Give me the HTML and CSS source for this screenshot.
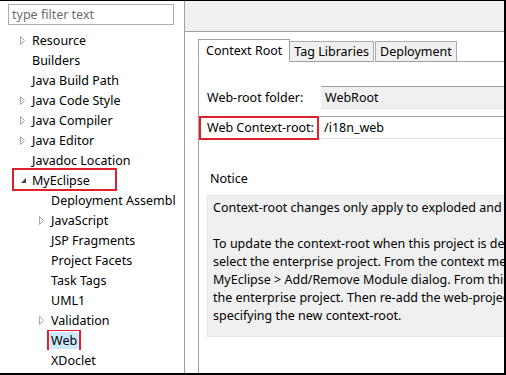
FILE: index.html
```html
<!DOCTYPE html>
<html lang="en">
<head>
    <meta charset="UTF-8">
    <title>Properties - Web</title>
    <link rel="stylesheet" href="styles.css">
</head>
<body>
    <div class="frame">
        <div class="nav">
            <div class="filter">type filter text</div>
            <ul class="tree">
                <li class="row"><span class="twisty closed"></span>Resource</li>
                <li class="row"><span class="twisty"></span>Builders</li>
                <li class="row"><span class="twisty"></span>Java Build Path</li>
                <li class="row"><span class="twisty closed"></span>Java Code Style</li>
                <li class="row"><span class="twisty closed"></span>Java Compiler</li>
                <li class="row"><span class="twisty closed"></span>Java Editor</li>
                <li class="row"><span class="twisty"></span>Javadoc Location</li>
                <li class="row"><span class="twisty open"></span>MyEclipse<span class="mark mark-myeclipse"></span></li>
                <li class="row sub"><span class="twisty"></span>Deployment Assembly</li>
                <li class="row sub"><span class="twisty closed"></span>JavaScript</li>
                <li class="row sub"><span class="twisty"></span>JSP Fragments</li>
                <li class="row sub"><span class="twisty"></span>Project Facets</li>
                <li class="row sub"><span class="twisty"></span>Task Tags</li>
                <li class="row sub"><span class="twisty"></span>UML1</li>
                <li class="row sub"><span class="twisty closed"></span>Validation</li>
                <li class="row sub"><span class="twisty"></span><span class="selected">Web</span></li>
                <li class="row sub"><span class="twisty"></span>XDoclet</li>
            </ul>
        </div>

        <div class="page">
            <div class="page-head"></div>
            <div class="page-body">
                <div class="tabs">
                    <div class="tab active">Context Root</div>
                    <div class="tab">Tag Libraries</div>
                    <div class="tab">Deployment</div>
                    <div class="tab-fill"></div>
                </div>
                <div class="tab-body">
                    <div class="field-row">
                        <div class="label">Web-root folder:</div>
                        <div class="input readonly">WebRoot</div>
                    </div>
                    <div class="field-row">
                        <div class="label boxed">Web Context-root:</div>
                        <div class="input">/i18n_web</div>
                    </div>
                    <div class="notice-title">Notice</div>
                    <div class="notice">
                        <p>Context-root changes only apply to exploded and packaged deployments.</p>
                        <p class="gap">To update the context-root when this project is deployed as a module of an enterprise project,</p>
                        <p>select the enterprise project. From the context menu open the</p>
                        <p>MyEclipse &gt; Add/Remove Module dialog. From this dialog remove the web-project from</p>
                        <p>the enterprise project. Then re-add the web-project to the enterprise project</p>
                        <p>specifying the new context-root.</p>
                    </div>
                </div>
            </div>
        </div>
    </div>
</body>
</html>
```

FILE: styles.css
```css
* {
    box-sizing: border-box;
}
body {
    margin: 0;
    font-family: "Noto Sans", "Liberation Sans", sans-serif;
    font-size: 12.5px;
    color: #000;
    background: #fff;
}
.frame {
    width: 506px;
    height: 375px;
    display: flex;
    border-top: 1px solid #000;
    border-right: 2px solid #000;
    border-bottom: 2px solid #000;
    overflow: hidden;
    background: #fff;
}

/* left tree */
.nav {
    width: 184px;
    flex: none;
    padding-top: 3px;
}
.filter {
    margin-left: 8px;
    width: 166px;
    height: 21px;
    border: 1px solid #abadb3;
    padding-left: 3px;
    line-height: 19px;
    color: #6d6d6d;
}
.tree {
    list-style: none;
    width: 175px;
    margin: 5px 0 0;
    padding: 0;
}
.row {
    position: relative;
    display: flex;
    align-items: center;
    height: 20px;
    padding-left: 16px;
    white-space: nowrap;
}
.row.sub {
    padding-left: 35px;
    overflow: hidden;
}
.twisty {
    width: 16px;
    height: 20px;
    flex: none;
    background-repeat: no-repeat;
    background-position: 4px 6px;
}
.twisty.closed {
    background-image: url("data:image/svg+xml,%3Csvg xmlns='http://www.w3.org/2000/svg' width='6' height='9'%3E%3Cpath d='M0.5 0.5 L4.5 4.5 L0.5 8.5 Z' fill='none' stroke='%23a6a6a6'/%3E%3C/svg%3E");
}
.twisty.open {
    background-image: url("data:image/svg+xml,%3Csvg xmlns='http://www.w3.org/2000/svg' width='7' height='9'%3E%3Cpath d='M6 2 L6 7 L1 7 Z' fill='%23404040'/%3E%3C/svg%3E");
}
.selected {
    background: #cce8ff;
    padding: 0 1px;
    margin-left: -1px;
    margin-top: 1px;
}
.row.sub .selected {
    outline: 2px solid #e0202c;
    outline-offset: 1px;
}
.mark {
    position: absolute;
    border: 2px solid #e0202c;
}
.mark-myeclipse {
    left: 12px;
    top: -2px;
    width: 105px;
    height: 23px;
}

/* right page */
.page {
    flex: 1;
    min-width: 0;
    border-left: 1px solid #a0a0a0;
    display: flex;
    flex-direction: column;
}
.page-head {
    height: 31px;
    flex: none;
    background: #f0f0f0;
    border-bottom: 1px solid #a0a0a0;
}
.page-body {
    flex: 1;
    padding: 7px 0 0 13px;
    display: flex;
    flex-direction: column;
    background: #fff;
}
.tabs {
    display: flex;
    align-items: flex-end;
    height: 23px;
    flex: none;
}
.tab {
    height: 21px;
    line-height: 19px;
    padding: 0 4px;
    background: #f0f0f0;
    border: 1px solid #acacac;
    border-bottom: 1px solid #a0a0a0;
    margin-left: -1px;
    white-space: nowrap;
}
.tab + .tab + .tab {
    margin-left: 1px;
}
.tab.active {
    height: 23px;
    margin-left: 0;
    padding: 1px 7px 0;
    background: #fff;
    border-color: #a0a0a0;
    border-bottom-color: #fff;
    position: relative;
    z-index: 1;
}
.tab-fill {
    flex: 1;
    border-bottom: 1px solid #a0a0a0;
}
.tab-body {
    flex: 1;
    margin-top: -1px;
    border-left: 1px solid #a0a0a0;
    padding: 25px 0 0 8px;
    overflow: hidden;
}
.field-row {
    display: flex;
    align-items: center;
    height: 23px;
    margin-bottom: 7px;
}
.label {
    width: 113px;
    flex: none;
    margin-right: 1px;
    white-space: nowrap;
}
.label.boxed {
    margin-left: -8px;
    width: 120px;
    height: 24px;
    line-height: 20px;
    padding-left: 6px;
    border: 2px solid #e0202c;
}
.input {
    flex: 1;
    height: 23px;
    line-height: 21px;
    padding-left: 4px;
    border-top: 1px solid #a0a0a0;
    border-bottom: 1px solid #e3e3e3;
    white-space: nowrap;
}
.input.readonly {
    background: #f0f0f0;
}
.notice-title {
    margin: 30px 0 0 3px;
    line-height: 20px;
}
.notice {
    margin-top: 6px;
    height: 142px;
    background: #f0f0f0;
    border: 1px solid #e3e3e3;
    border-right: none;
    padding: 3px 0 0 5px;
    white-space: nowrap;
}
.notice p {
    margin: 0;
    line-height: 18px;
}
.notice p.gap {
    margin-top: 18px;
}
```
